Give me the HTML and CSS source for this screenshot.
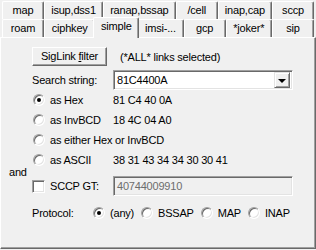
FILE: index.html
```html
<!DOCTYPE html>
<html>
<head>
    <title>Filter</title>
    <link rel="stylesheet" href="styles.css">
</head>
<body>
    <div class="tabctl">
        <div class="tabrow first">
            <div class="tab">map</div>
            <div class="tab">isup,dss1</div>
            <div class="tab">ranap,bssap</div>
            <div class="tab">/cell</div>
            <div class="tab">inap,cap</div>
            <div class="tab">sccp</div>
        </div>
        <div class="tabrow">
            <div class="tab">roam</div>
            <div class="tab">ciphkey</div>
            <div class="tab sel">simple</div>
            <div class="tab">imsi-...</div>
            <div class="tab">gcp</div>
            <div class="tab">*joker*</div>
            <div class="tab">sip</div>
        </div>

        <div class="panel">
            <!-- filter button -->
            <div class="row btnrow">
                <div class="btn">SigLink <u>f</u>ilter</div>
                <span class="note">(*ALL* links selected)</span>
            </div>

            <!-- search -->
            <div class="row searchrow">
                <span class="lbl">Search string:</span>
                <div class="combo">
                    <span class="combotext">81C4400A</span>
                    <span class="drop"><span class="arrow"></span></span>
                </div>
            </div>

            <div class="row opt">
                <span class="radio on"></span>
                <span class="optlbl">as Hex</span>
                <span class="val">81 C4 40 0A</span>
            </div>
            <div class="row opt">
                <span class="radio"></span>
                <span class="optlbl">as InvBCD</span>
                <span class="val">18 4C 04 A0</span>
            </div>
            <div class="row opt">
                <span class="radio"></span>
                <span class="optlbl">as either Hex or InvBCD</span>
            </div>
            <div class="row opt">
                <span class="radio"></span>
                <span class="optlbl">as ASCII</span>
                <span class="val">38 31 43 34 34 30 30 41</span>
            </div>

            <div class="andline">and</div>

            <div class="row sccprow">
                <span class="check"></span>
                <span class="optlbl">SCCP GT:</span>
                <div class="edit disabled">40744009910</div>
            </div>

            <div class="row protorow">
                <span class="protolbl">Protocol:</span>
                <span class="radio on"></span><span class="plbl">(any)</span>
                <span class="radio"></span><span class="plbl">BSSAP</span>
                <span class="radio"></span><span class="plbl">MAP</span>
                <span class="radio"></span><span class="plbl">INAP</span>
            </div>
        </div>
    </div>
</body>
</html>
```

FILE: styles.css
```css
body {
    margin: 0;
    background-color: #f0f0f0;
    font-family: "Liberation Sans", Arial, sans-serif;
    font-size: 11px;
    letter-spacing: -0.2px;
    color: #000;
}

.tabctl {
    width: 316px;
    height: 250px;
}

.tabrow {
    display: flex;
    padding: 0 2px 0 2px;
    height: 18px;
}

.tabrow.first {
    margin-top: 1px;
}

.tab {
    flex: 1 1 auto;
    box-sizing: border-box;
    min-width: 42px;
    height: 18px;
    padding: 0 5px;
    border-top: 1px solid #fff;
    border-left: 1px solid #fff;
    border-right: 1px solid #696969;
    box-shadow: inset -1px 0 #a0a0a0;
    border-radius: 2px 2px 0 0;
    text-align: center;
    line-height: 16px;
    white-space: nowrap;
    background-color: #f0f0f0;
}

.tab.sel {
    position: relative;
    z-index: 1;
    height: 21px;
    margin: -2px -2px -1px -2px;
    line-height: 16px;
}

.panel {
    box-sizing: border-box;
    height: 212px;
    border-top: 1px solid #fff;
    border-left: 1px solid #fff;
    border-right: 1px solid #696969;
    border-bottom: 1px solid #696969;
    box-shadow: inset -1px -1px #a0a0a0;
    padding-left: 31px;
}

.row {
    display: flex;
    align-items: center;
}

.btnrow {
    margin-top: 9px;
    height: 19px;
}

.btn {
    box-sizing: border-box;
    width: 75px;
    height: 19px;
    line-height: 16px;
    text-align: center;
    border-top: 1px solid #fff;
    border-left: 1px solid #fff;
    border-right: 1px solid #696969;
    border-bottom: 1px solid #696969;
    box-shadow: inset -1px -1px #a0a0a0;
}

.note {
    margin-left: 13px;
}

.searchrow {
    margin-top: 4px;
    height: 20px;
}

.lbl {
    width: 81px;
}

.combo {
    box-sizing: border-box;
    width: 180px;
    height: 20px;
    display: flex;
    align-items: center;
    background-color: #fff;
    border-top: 1px solid #a0a0a0;
    border-left: 1px solid #a0a0a0;
    border-right: 1px solid #fff;
    border-bottom: 1px solid #fff;
    box-shadow: inset 1px 1px #696969, inset -1px -1px #e3e3e3;
    padding: 0 2px 0 3px;
}

.combotext {
    flex: 1;
}

.drop {
    box-sizing: border-box;
    width: 16px;
    height: 16px;
    background-color: #f0f0f0;
    border-top: 1px solid #e3e3e3;
    border-left: 1px solid #e3e3e3;
    border-right: 1px solid #696969;
    border-bottom: 1px solid #696969;
    box-shadow: inset 1px 1px #fff, inset -1px -1px #a0a0a0;
    display: flex;
    align-items: center;
    justify-content: center;
}

.arrow {
    width: 0;
    height: 0;
    border-left: 4px solid transparent;
    border-right: 4px solid transparent;
    border-top: 4px solid #000;
    margin-top: 1px;
}

.opt {
    height: 20px;
}

.radio {
    box-sizing: border-box;
    width: 12px;
    height: 12px;
    border-radius: 50%;
    background-color: #fff;
    border: 1px solid;
    border-color: #a0a0a0 #fff #fff #a0a0a0;
    box-shadow: inset 1px 1px #696969, inset -1px -1px #e3e3e3;
    margin-left: 1px;
    display: flex;
    align-items: center;
    justify-content: center;
    flex: none;
}

.radio.on::after {
    content: "";
    width: 4px;
    height: 4px;
    border-radius: 50%;
    background-color: #000;
}

.optlbl {
    margin-left: 5px;
    width: 63px;
    white-space: nowrap;
}

.val {
    white-space: nowrap;
}

.andline {
    margin: -4px 0 0 -23px;
    height: 13px;
    line-height: 13px;
}

.sccprow {
    margin-top: -3px;
    height: 20px;
}

.check {
    box-sizing: border-box;
    width: 13px;
    height: 13px;
    background-color: #fff;
    border: 1px solid;
    border-color: #a0a0a0 #fff #fff #a0a0a0;
    box-shadow: inset 1px 1px #696969, inset -1px -1px #e3e3e3;
    flex: none;
}

.sccprow .optlbl {
    width: 63px;
}

.edit {
    box-sizing: border-box;
    width: 180px;
    height: 20px;
    line-height: 18px;
    padding-left: 3px;
    border-top: 1px solid #a0a0a0;
    border-left: 1px solid #a0a0a0;
    border-right: 1px solid #fff;
    border-bottom: 1px solid #fff;
    box-shadow: inset 1px 1px #696969, inset -1px -1px #e3e3e3;
}

.edit.disabled {
    background-color: #f0f0f0;
    color: #6d6d6d;
}

.protorow {
    margin-top: 7px;
    height: 20px;
}

.protolbl {
    width: 60px;
}

.plbl {
    margin: 0 6px 0 5px;
}
```
